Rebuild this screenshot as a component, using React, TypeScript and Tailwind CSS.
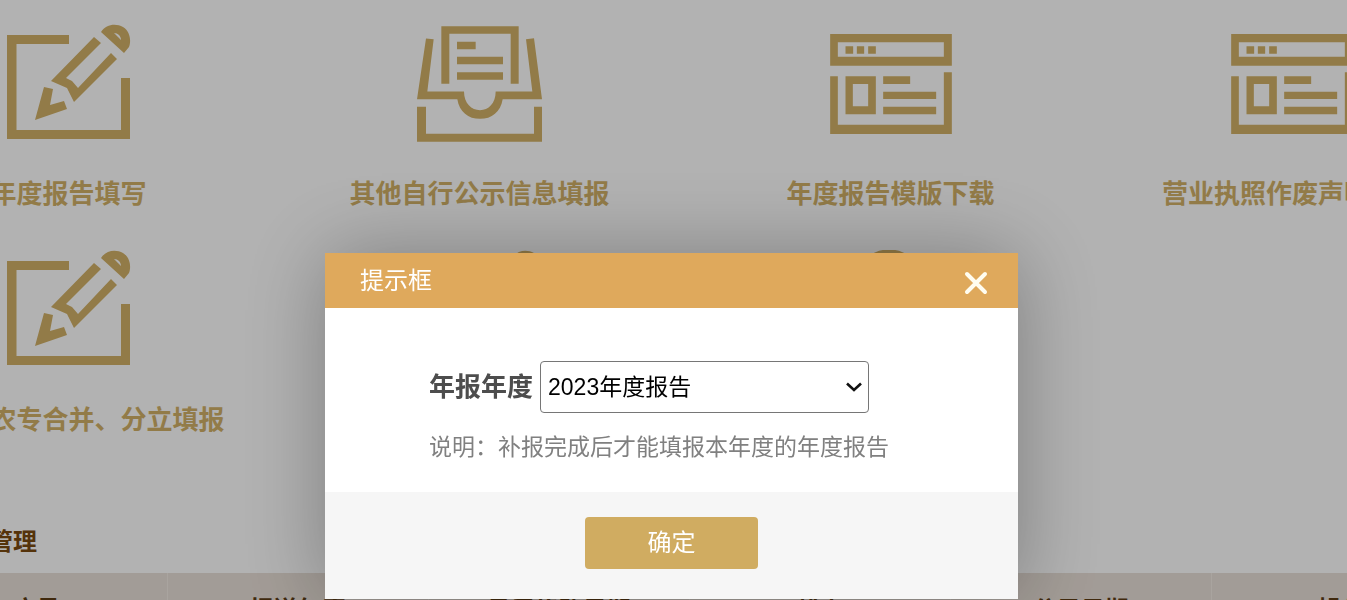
import React, { useState } from 'react';

type IconProps = { className?: string };

const PencilIcon = ({ className }: IconProps) => (
  <svg viewBox="7 24 124 120" className={className} fill="currentColor" aria-hidden="true">
    <path d="M7 35H69V44H16.500V130H121V78H130V139H7Z" />
    <path d="M94 37L101 43L66 78L72 81L78 88L111 53L117 59L74 102L67 88L51 81Z" />
    <path d="M44 87L53 89L50 105L64 101L67 109L35 120Z" />
    <path
      fillRule="evenodd"
      d="M101 32C106 24 116 23 123 27C131 32 131 42 129 47L124 53Z M114 33L121 40C121 36 118 33 114 33Z"
    />
  </svg>
);

const TrayIcon = ({ className }: IconProps) => (
  <svg viewBox="231 78 375 347" className={className} fill="currentColor" aria-hidden="true">
    <path d="M304 78H536V251H512V101H328V251H304Z" />
    <path d="M351 125H407V147H351Z M351 170H489V192H351Z M351 216H489V239H351Z" />
    <path d="M258 115L281 117L262 274H372C372 310 395 330 420 330C445 330 467 310 467 274H577L558 117L582 114L606 297H488C482 335 455 356 420 356C385 356 358 335 352 297H231Z" />
    <path d="M231 320H258V401H582V320H606V425H231Z" />
  </svg>
);

const BrowserIcon = ({ className }: IconProps) => (
  <svg viewBox="148 104 365 300" className={className} fill="currentColor" aria-hidden="true">
    <path fillRule="evenodd" d="M148 104H513V199H148Z M171 129V172H489V129Z" />
    <path d="M194 141H217V163H194Z M228 141H250V163H228Z M262 141H285V163H262Z" />
    <path d="M148 231H171V376H489V219H513V404H148Z" />
    <path fillRule="evenodd" d="M194 231H285V345H194Z M216 254V321H262V254Z" />
    <path d="M307 231H388V254H307Z M307 277H466V299H307Z M307 322H466V345H307Z" />
  </svg>
);

const UserIcon = ({ className }: IconProps) => (
  <svg viewBox="0 0 120 120" className={className} fill="none" stroke="currentColor" strokeWidth="9" aria-hidden="true">
    <circle cx="58" cy="34" r="30" />
    <path d="M6 120C6 92 28 74 58 74S110 92 110 120" />
  </svg>
);

const services = [
  { name: '年度报告填写', icon: <PencilIcon className="w-[124px] h-[120px]" /> },
  { name: '其他自行公示信息填报', icon: <TrayIcon className="w-[125px] h-[116px]" /> },
  { name: '年度报告模版下载', icon: <BrowserIcon className="w-[122px] h-[100px]" /> },
  { name: '营业执照作废声明填报', icon: <BrowserIcon className="w-[122px] h-[100px]" /> },
  { name: '农合、农专合并、分立填报', icon: <PencilIcon className="w-[124px] h-[120px]" /> },
  { name: '简易注销公告填报', icon: <PencilIcon className="w-[124px] h-[120px]" /> },
  { name: '联络员变更', icon: <UserIcon className="w-[120px] h-[120px]" /> },
];

const columns = ['序号', '报送年度', '最后修改日期', '状态', '公示日期', '操作'];

const ReportDialog = () => {
  const [year, setYear] = useState('2023');

  return (
    <div className="fixed inset-0 flex items-start justify-center bg-black/30 pt-[253px] pr-1">
      <div
        role="dialog"
        aria-labelledby="dialog-title"
        className="w-[693px] bg-white shadow-[1px_1px_80px_rgba(0,0,0,0.3)]"
      >
        {/* Title bar */}
        <div className="flex items-center justify-between h-[55px] pl-[35px] pr-[30px] bg-[#dfa95c] text-white">
          <h2 id="dialog-title" className="text-[24px] leading-[36px]">提示框</h2>
          <button type="button" aria-label="关闭" className="pt-1">
            <svg viewBox="0 0 24 24" className="w-6 h-6" stroke="#fffdf0" strokeWidth="4" strokeLinecap="round">
              <path d="M3 3L21 21M21 3L3 21" />
            </svg>
          </button>
        </div>

        {/* Year picker */}
        <div className="h-[184px] pt-[53px] pl-[104px]">
          <div className="flex items-center">
            <label htmlFor="year" className="text-[26px] leading-[36px] font-bold text-[#4d4d4d] mr-[7px]">
              年报年度
            </label>
            <div className="relative">
              <select
                id="year"
                value={year}
                onChange={(e) => setYear(e.target.value)}
                className="appearance-none w-[329px] h-[52px] pl-[7px] border border-[#767676] rounded bg-white text-[23px] text-black"
              >
                <option value="2023">2023年度报告</option>
                <option value="2022">2022年度报告</option>
              </select>
              <svg
                viewBox="0 0 16 10"
                className="absolute right-[7px] top-[21px] w-4 h-2.5 pointer-events-none"
                fill="none"
                stroke="#111"
                strokeWidth="2.600"
              >
                <path d="M1 1.500L8 8L15 1.500" />
              </svg>
            </div>
          </div>
          <p className="mt-4 text-[23px] leading-[36px] text-[#808080]">说明：补报完成后才能填报本年度的年度报告</p>
        </div>

        {/* Footer */}
        <div className="flex items-start justify-center h-[107px] pt-[25px] bg-[#f6f6f6]">
          <button type="button" className="w-[173px] h-[52px] rounded bg-[#d0ac61] text-[24px] text-white">
            确定
          </button>
        </div>
      </div>
    </div>
  );
};

const App = () => {
  return (
    <div className="h-screen overflow-hidden bg-white font-['Liberation_Sans','Noto_Sans_CJK_SC',sans-serif]">
      <main>
        {/* Service entries */}
        <div className="grid grid-cols-[411fr_411fr_411fr_392fr] gap-y-[34px] -ml-[137px] -mr-[141px] pt-5">
          {services.map((item) => (
            <a key={item.name} href="#" className="flex flex-col items-center text-[#d2b167]">
              <span className="flex items-center h-32">{item.icon}</span>
              <span className="mt-7 text-[26px] leading-[36px] font-bold whitespace-nowrap">{item.name}</span>
            </a>
          ))}
        </div>

        {/* Report list */}
        <h2 className="mt-[86px] mb-[13px] -ml-[107px] text-[24px] leading-[36px] font-bold text-[#7a4a10]">
          年报信息管理
        </h2>
        <div className="-ml-[94px] -mr-[126px]">
          <table className="w-full table-fixed border-collapse">
            <thead>
              <tr className="h-[74px] bg-[#e9e0d8]">
                {columns.map((name) => (
                  <th key={name} className="border-r border-[#f2ebe4] text-[24px] font-bold text-[#5c3c14]">
                    {name}
                  </th>
                ))}
              </tr>
            </thead>
          </table>
        </div>
      </main>

      <ReportDialog />
    </div>
  );
};

export default App;
